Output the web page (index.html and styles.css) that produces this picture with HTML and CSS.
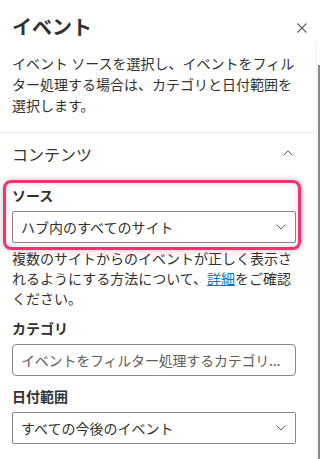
FILE: index.html
```html
<!DOCTYPE html>
<html lang="ja">
<head>
    <meta charset="UTF-8">
    <meta name="viewport" content="width=device-width, initial-scale=1.0">
    <title>イベント</title>
    <link rel="stylesheet" href="styles.css">
</head>
<body>
    <div class="panel">
        <div class="header">
            <h1 class="title">イベント</h1>
            <button class="closeButton" aria-label="閉じる">
                <svg width="10" height="10" viewBox="0 0 10 10"><path d="M0.5 0.5 L9.5 9.5 M9.5 0.5 L0.5 9.5" stroke="#605e5c" stroke-width="1.1" fill="none"/></svg>
            </button>
        </div>
        <div class="scrollArea">
            <div class="scrollThumb"></div>
            <p class="description">イベント ソースを選択し、イベントをフィルター処理する場合は、カテゴリと日付範囲を選択します。</p>
            <div class="divider"></div>
            <div class="sectionHeader">
                <span>コンテンツ</span>
                <svg width="10" height="6" viewBox="0 0 10 6"><path d="M0.5 5.5 L5 1 L9.5 5.5" stroke="#605e5c" stroke-width="1" fill="none"/></svg>
            </div>
            <div class="field highlighted">
                <label class="fieldLabel">ソース</label>
                <div class="dropdown">
                    <span>ハブ内のすべてのサイト</span>
                    <svg width="10" height="6" viewBox="0 0 10 6"><path d="M0.5 0.5 L5 5 L9.5 0.5" stroke="#605e5c" stroke-width="1" fill="none"/></svg>
                </div>
            </div>
            <p class="helpText">複数のサイトからのイベントが正しく表示されるようにする方法について、<a href="#">詳細</a>をご確認ください。</p>
            <div class="field">
                <label class="fieldLabel">カテゴリ</label>
                <input class="textInput" type="text" placeholder="イベントをフィルター処理するカテゴリ...">
            </div>
            <div class="field dateField">
                <label class="fieldLabel">日付範囲</label>
                <div class="dropdown">
                    <span>すべての今後のイベント</span>
                    <svg width="10" height="6" viewBox="0 0 10 6"><path d="M0.5 0.5 L5 5 L9.5 0.5" stroke="#605e5c" stroke-width="1" fill="none"/></svg>
                </div>
            </div>
        </div>
    </div>
</body>
</html>
```

FILE: styles.css
```css
body {
    margin: 0;
    background-color: #ffffff;
    font-family: "Noto Sans CJK JP", "Noto Sans", sans-serif;
    color: #323130;
}
.panel {
    width: 320px;
    height: 459px;
    overflow: hidden;
    display: flex;
    flex-direction: column;
}
.header {
    display: flex;
    justify-content: space-between;
    align-items: center;
    padding: 13px 12px 0 12px;
    height: 28px;
}
.title {
    margin: 0;
    font-size: 20px;
    line-height: 28px;
    font-weight: 700;
}
.closeButton {
    border: none;
    background: none;
    padding: 0;
    width: 10px;
    height: 10px;
    margin-right: 1px;
    margin-top: 2px;
    display: flex;
}
.scrollArea {
    position: relative;
    flex: 1;
    width: 316px;
    border-right: 1px solid #f3f2f1;
}
.scrollThumb {
    position: absolute;
    top: 24px;
    bottom: 0;
    right: -4px;
    width: 2px;
    background-color: #8a8886;
}
.description {
    margin: 12px 0 0 0;
    padding: 0 16px 0 12px;
    font-size: 14px;
    line-height: 21px;
}
.divider {
    margin-top: 16px;
    height: 1px;
    background-color: #edebe9;
}
.sectionHeader {
    display: flex;
    justify-content: space-between;
    align-items: center;
    height: 42px;
    padding: 0 23px 0 12px;
    font-size: 16px;
    font-weight: 400;
}
.sectionHeader svg {
    margin-top: -2px;
}
.field {
    margin: 10px 20px 0 12px;
}
.highlighted {
    position: relative;
}
.highlighted::before {
    content: "";
    position: absolute;
    top: -5px;
    left: -9px;
    right: -5px;
    bottom: -7px;
    border: 3px solid #ff2e6e;
    border-radius: 8px;
    box-shadow: 0 0 6px rgba(0, 0, 0, 0.25), inset 0 0 6px rgba(0, 0, 0, 0.15);
    pointer-events: none;
}
.fieldLabel {
    display: block;
    font-size: 14px;
    line-height: 20px;
    font-weight: 700;
    margin-bottom: 6px;
}
.dropdown {
    box-sizing: border-box;
    height: 32px;
    border: 1px solid #8a8886;
    border-radius: 2px;
    display: flex;
    justify-content: space-between;
    align-items: center;
    padding: 0 9px 0 8px;
    font-size: 14px;
    color: #323130;
}
.helpText {
    margin: 5px 16px 0 12px;
    font-size: 14px;
    line-height: 20px;
}
.helpText a {
    color: #0078d4;
    text-decoration: underline;
}
.textInput {
    box-sizing: border-box;
    display: block;
    width: 100%;
    height: 32px;
    border: 1px solid #8a8886;
    border-radius: 4px;
    padding: 0 2px 0 8px;
    font-family: "Noto Sans CJK JP", "Noto Sans", sans-serif;
    font-size: 14px;
    letter-spacing: -0.2px;
    color: #323130;
}
.textInput::placeholder {
    color: #605e5c;
}
.dateField {
    margin-top: 10px;
}
```
